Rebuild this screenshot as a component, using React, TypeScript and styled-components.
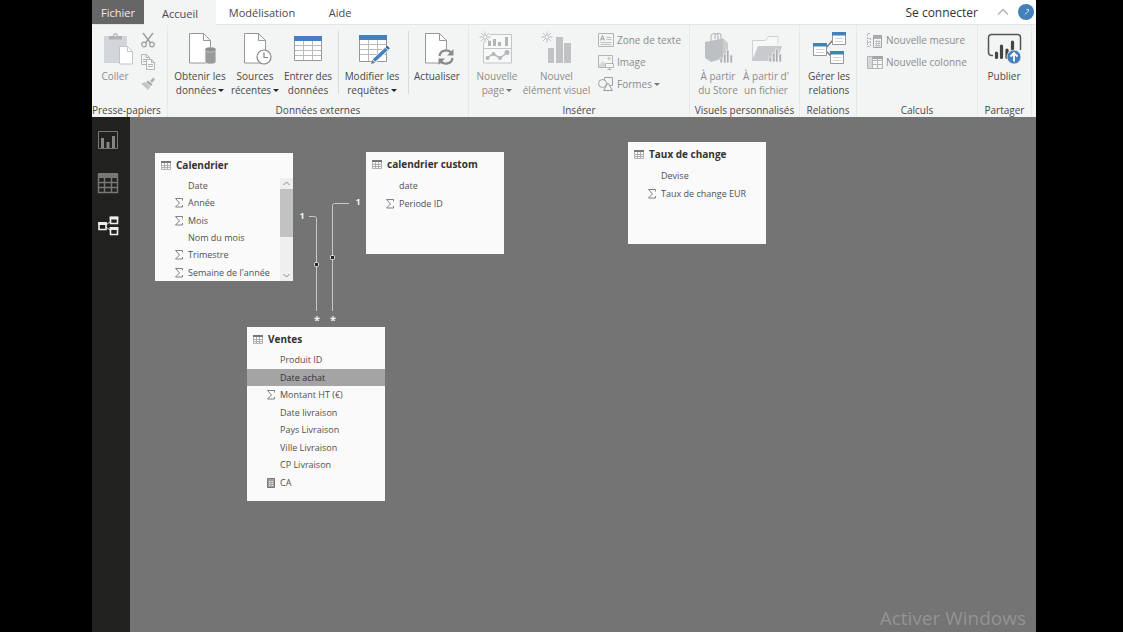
import React from "react";
import styled, { createGlobalStyle } from "styled-components";

const BLUE = "#4480bb";
const INK = "#4a4a4a";
const FAINT = "#b2b5b8";

const GlobalStyle = createGlobalStyle`
  * { box-sizing: border-box; }
  body {
    margin: 0;
    background: #000;
    font-family: "Open Sans", "Noto Sans", sans-serif;
    color: ${INK};
  }
  button { font-family: inherit; }
`;

const Screen = styled.div`
  min-height: 100vh;
  padding: 0 87px 0 92px;
  display: flex;
  flex-direction: column;
`;

/* ---------- tab strip ---------- */

const TabBar = styled.nav`
  display: flex;
  height: 25px;
  background: #fff;
  border-bottom: 1px solid #e4e5e7;
`;

const Tab = styled.button<{ $width: number; $kind?: "file" | "active" }>`
  width: ${(p) => p.$width}px;
  height: ${(p) => (p.$kind === "active" ? 25 : 24)}px;
  padding: 2px 0 0;
  border: 0;
  font-size: 11px;
  line-height: 22px;
  color: ${(p) => (p.$kind === "file" ? "#ececec" : INK)};
  background: ${(p) =>
    p.$kind === "file" ? "#666" : p.$kind === "active" ? "#f3f4f4" : "transparent"};
`;

const Account = styled.div`
  margin-left: auto;
  padding-right: 2px;
  display: flex;
  align-items: center;
`;

const SignIn = styled.button`
  padding: 2px 0 0;
  border: 0;
  background: none;
  color: #333;
  font-size: 12px;
  line-height: 22px;
  margin-right: 18px;
`;

const IconButton = styled.button`
  display: flex;
  align-items: center;
  justify-content: center;
  padding: 0;
  border: 0;
  background: none;
`;

const HelpButton = styled(IconButton)`
  margin-left: 8px;
`;

/* ---------- ribbon ---------- */

const Ribbon = styled.div`
  display: grid;
  grid-template-columns: 76fr 301fr 221fr 110fr 57fr 121fr 54fr;
  height: 92px;
  padding-right: 4px;
  background: #f3f4f4;
`;

const Group = styled.section`
  min-width: 0;
  display: flex;
  flex-direction: column;
  border-right: 1px solid #e6e8ea;
`;

const GroupBody = styled.div`
  flex: 1;
  display: flex;
  padding: 4px 0 0 4px;
`;

const GroupTitle = styled.div<{ $start?: boolean }>`
  font-size: 10px;
  line-height: 14px;
  text-align: ${(p) => (p.$start ? "left" : "center")};
  white-space: nowrap;
`;

const BigButton = styled.button<{ $width: number; $off?: boolean }>`
  flex: none;
  width: ${(p) => p.$width}px;
  padding: 2px 0 0;
  border: 0;
  background: none;
  display: flex;
  flex-direction: column;
  align-items: center;
  gap: 4px;
  font-size: 10px;
  line-height: 14px;
  white-space: nowrap;
  color: ${(p) => (p.$off ? "#8c8c8c" : INK)};
`;

const Line = styled.span`
  display: block;
`;

const SmallList = styled.div`
  display: flex;
  flex-direction: column;
  padding-left: 6px;
`;

const SmallButton = styled.button`
  display: flex;
  align-items: center;
  gap: 3px;
  height: 22px;
  padding: 0;
  border: 0;
  background: none;
  color: #8c8c8c;
  font-size: 10px;
  line-height: 14px;
  white-space: nowrap;
`;

const Divider = styled.span`
  flex: none;
  width: 1px;
  height: 63px;
  margin: 2px 1px 0 4px;
  background: #d6dade;
`;

const CaretMark = styled.span<{ $off?: boolean }>`
  display: inline-block;
  margin-left: 2px;
  vertical-align: 2px;
  border: 3px solid transparent;
  border-top: 3px solid ${(p) => (p.$off ? "#777" : "#222")};
  border-bottom: 0;
`;

/* ---------- work area ---------- */

const Work = styled.div`
  flex: 1;
  display: flex;
`;

const ViewNav = styled.nav`
  flex: none;
  width: 38px;
  padding: 12px 0 0 5px;
  background: #21211f;
  display: flex;
  flex-direction: column;
  gap: 21px;
`;

const ViewButton = styled(IconButton)`
  width: 22px;
  height: 22px;
`;

const Canvas = styled.main`
  position: relative;
  flex: 1;
  background: #747474;
  overflow: hidden;
`;

const Links = styled.svg`
  position: absolute;
  left: 0;
  top: 0;
`;

const Card = styled.article<{ $x: number; $y: number; $h: number; $rest: number }>`
  position: absolute;
  left: ${(p) => p.$x}px;
  top: ${(p) => p.$y}px;
  width: 138px;
  height: ${(p) => p.$h}px;
  padding-bottom: ${(p) => p.$rest}px;
  background: #fafafa;
  display: flex;
  flex-direction: column;
`;

const CardTitle = styled.h2`
  margin: 0;
  padding-left: 6px;
  display: flex;
  align-items: center;
  gap: 5px;
  height: 24px;
  font-size: 10px;
  font-weight: 700;
  color: #333;
`;

const CardBody = styled.div`
  flex: 1;
  min-height: 0;
  display: flex;
`;

const Fields = styled.ul`
  flex: 1;
  margin: 0;
  padding: 0;
  list-style: none;
  display: grid;
  grid-auto-rows: 1fr;
`;

const Field = styled.li<{ $selected?: boolean }>`
  display: grid;
  grid-template-columns: 10px 1fr;
  column-gap: 4px;
  align-items: center;
  min-height: 0;
  padding: 1px 0 0 19px;
  font-size: 9px;
  line-height: 16px;
  white-space: nowrap;
  color: ${(p) => (p.$selected ? "#333" : "#505050")};
  background: ${(p) => (p.$selected ? "#a3a4a3" : "transparent")};
`;

const ScrollTrack = styled.div`
  flex: none;
  width: 13px;
  margin-top: 1px;
  background: #efefef;
  display: flex;
  flex-direction: column;
  align-items: center;
  justify-content: space-between;
`;

const ScrollThumb = styled.div`
  width: 13px;
  height: 48px;
  margin-bottom: auto;
  background: #c2c2c2;
`;

const Watermark = styled.div`
  position: absolute;
  right: 10px;
  bottom: 0;
  font-size: 19px;
  line-height: 28px;
  color: #939393;
`;

/* ---------- large icons ---------- */

const Big = ({ children }: { children: React.ReactNode }) => (
  <svg width="40" height="34" viewBox="0 0 40 34" fill="none" aria-hidden="true">
    {children}
  </svg>
);

const Sheet = ({ x }: { x: number }) => (
  <g transform={`translate(${x} 0)`} stroke="#979797">
    <path d="M.5 2.500h14l7 7v22.500h-21z" fill="#fff" />
    <path d="M14.500 2.500v7h7" />
  </g>
);

const Spark = ({ x, y }: { x: number; y: number }) => (
  <g transform={`translate(${x} ${y})`}>
    <circle r="5.500" fill="#f3f4f4" />
    <path d="M0-5.500v11M-5.500 0h11M-4-4l8 8M4-4l-8 8" stroke="#bcbfc1" />
    <circle r="2" fill="#f3f4f4" stroke="#bcbfc1" strokeWidth=".8" />
  </g>
);

const PasteIcon = () => (
  <Big>
    <path d="M9 5h23v27H9z" fill="#d2d5d9" />
    <path d="M14 8.500V5h4c0-4 5-4 5 0h4v3.500z" fill="#b0b3b6" />
    <path d="M19.500 3.500h2v2h-2z" fill="#f3f4f4" />
    <path d="M24.500 15.500h8l5 5v12.500h-13z" fill="#fff" stroke="#c2c6c9" />
    <path d="M32.500 15.500v5h5" stroke="#c2c6c9" />
  </Big>
);

const GetDataIcon = () => (
  <Big>
    <Sheet x={9} />
    <path d="M25 19v11.500c0 3.500 11 3.500 11 0V19z" fill="#9a9a9a" stroke="#f3f4f4" strokeWidth=".8" />
    <ellipse cx="30.500" cy="18.500" rx="5.500" ry="2.500" fill="#8d8d8d" stroke="#ddd" strokeWidth=".6" />
  </Big>
);

const RecentIcon = () => (
  <Big>
    <Sheet x={9} />
    <circle cx="29" cy="26" r="7" fill="#fff" stroke="#858585" strokeWidth="1.200" />
    <path d="M29 21.500V26.500h4" stroke="#858585" strokeWidth="1.200" />
  </Big>
);

const Sheetgrid = ({ x, y, h }: { x: number; y: number; h: number }) => (
  <g transform={`translate(${x} ${y})`}>
    <path d={`M.5.500h27v${h}h-27z`} fill="#fff" stroke="#979797" />
    <path
      d={`M9.500 5v${h - 5}M18.500 5v${h - 5}M1 9.500h26M1 14.500h26M1 19.500h26`}
      stroke="#bbb"
    />
    <path d="M0 0h28v5H0z" fill={BLUE} />
  </g>
);

const EnterIcon = () => (
  <Big>
    <Sheetgrid x={6} y={5} h={24} />
  </Big>
);

const EditIcon = () => (
  <Big>
    <Sheetgrid x={7} y={4} h={26} />
    <path d="M19 33l1.500-5L33 15.500l4 3.500L24 31.500z" fill="#f8f8f8" />
    <path d="M22 29.500L34.500 18" stroke={BLUE} strokeWidth="3.500" />
    <path d="M35 17.500l1.500-1.500" stroke="#2f6396" strokeWidth="3.500" />
    <path d="M19 33l1.200-4 3 2.800z" fill="#777" />
  </Big>
);

const RefreshIcon = () => (
  <Big>
    <Sheet x={8} />
    <circle cx="29" cy="26" r="8" fill="#f3f4f4" />
    <path d="M22.500 25c.8-6 8.500-7.500 12-3M35.500 27c-.8 6-8.500 7.500-12 3" stroke="#8a8a8a" strokeWidth="2.200" />
    <path d="M36.500 18v6.500H30zM21.500 34v-6.500H28z" fill="#8a8a8a" />
  </Big>
);

const NewPageIcon = () => (
  <Big>
    <path d="M6.500 3.500h28v28.500h-28zM7 17.500h27" fill="#f8f8f8" stroke="#c3c6c8" />
    <path d="M11 10h3v5h-3zM16 8h3v7h-3zM21 11h3v4h-3zM28 6h3v9h-3z" fill="#b3b6b9" />
    <path d="M10 27l6-4 7 4 8-6" stroke="#b6b9bb" strokeWidth="1.500" />
    <g fill="#b3b6b9">
      <circle cx="10.500" cy="27" r="2" />
      <circle cx="16.500" cy="23" r="2" />
      <circle cx="23" cy="27" r="2" />
      <circle cx="30" cy="21.500" r="2.500" />
    </g>
    <Spark x={8} y={6} />
  </Big>
);

const NewVisualIcon = () => (
  <Big>
    <path d="M11 17h6v15h-6zM19 6h7v26h-7zM27 12h7v20h-7z" fill="#c0c3c5" />
    <Spark x={10} y={6} />
  </Big>
);

const MiniBars = ({ x, y }: { x: number; y: number }) => (
  <path
    transform={`translate(${x} ${y})`}
    d="M0 8h2.500v5H0zM3.500 4H6v9H3.500zM6.500 0H9v13H6.500zM10 5h2.500v8H10z"
    fill="#a9adb0"
    stroke="#f3f4f4"
    strokeWidth=".7"
  />
);

const StoreIcon = () => (
  <Big>
    <path d="M13 10V5.500c0-4 7-4 7 0V10M17 8V4.500c0-3 6-3 6 0V8" stroke="#b8bbbe" strokeWidth="1.200" />
    <path d="M7 11l18-3.500L30 12v14l-17 5-6-4z" fill="#bdc0c3" />
    <path d="M25 7.500L30 12v14l-5-2z" fill="#cbced0" />
    <MiniBars x={22} y={19} />
  </Big>
);

const FolderIcon = () => (
  <Big>
    <path d="M6.500 29V9.500h13l3-4h9.500v7" fill="#f7f7f7" stroke="#cdd0d2" />
    <path d="M6 30l6-15h24l-5 15z" fill="#c8cbcd" />
    <MiniBars x={23} y={18} />
  </Big>
);

const MiniTable = ({ x, y }: { x: number; y: number }) => (
  <g transform={`translate(${x} ${y})`}>
    <path d="M.5.500h13v12H.500z" fill="#fff" stroke="#979797" />
    <path d="M0 0h14v3.500H0z" fill={BLUE} />
    <path d="M3 6.500h8M3 9.500h8" stroke="#d2d2d2" />
  </g>
);

const RelationsIcon = () => (
  <Big>
    <path d="M16 18l8-9M16 19l6 6" stroke="#808080" strokeWidth="1.500" />
    <MiniTable x={23} y={1} />
    <MiniTable x={4} y={12} />
    <MiniTable x={21} y={20} />
  </Big>
);

const PublishIcon = () => (
  <Big>
    <path d="M9 24.500H7.500a3 3 0 0 1-3-3V6.500a3 3 0 0 1 3-3h26a3 3 0 0 1 3 3V19" stroke="#555" strokeWidth="1.500" />
    <path d="M12.500 22v4.500M17.500 15v11.500M23 19v7.500M28.500 11v12" stroke="#444" strokeWidth="3.200" strokeLinecap="round" />
    <circle cx="30" cy="26" r="7" fill={BLUE} stroke="#f3f4f4" strokeWidth=".8" />
    <path d="M30 30.500v-8M26.500 25.500l3.500-3.500 3.500 3.500" stroke="#fff" strokeWidth="1.800" />
  </Big>
);

/* ---------- small icons ---------- */

const Small = ({ children }: { children: React.ReactNode }) => (
  <svg width="16" height="16" viewBox="0 0 16 16" fill="none" stroke={FAINT} aria-hidden="true">
    {children}
  </svg>
);

const CutIcon = () => (
  <Small>
    <path d="M3 1l7.500 10M13 1L5.500 11" stroke="#9da0a3" strokeWidth="1.500" />
    <circle cx="4" cy="12.500" r="2.300" stroke="#9da0a3" strokeWidth="1.200" />
    <circle cx="12" cy="12.500" r="2.300" stroke="#9da0a3" strokeWidth="1.200" />
  </Small>
);

const CopyIcon = () => (
  <Small>
    <path d="M1.500.500h5l3 3v7h-8zM6 .5v3h3.500M3 5.500h4M3 7.500h4" />
    <path d="M6.500 5.500h5l3 3v7h-8z" fill="#f7f7f7" />
    <path d="M11.500 5.500v3h3M8 10.500h5M8 12.500h5" />
  </Small>
);

const BrushIcon = () => (
  <Small>
    <path d="M10 5l3-3.500 2 2L12 7z" fill="#b0b3b5" stroke="none" />
    <path d="M8 4.500l4.500 4-1.500 1.500L6.500 6z" fill="#a2a5a7" stroke="none" />
    <path d="M1 7.500l5-1.500 4.500 4.500L8 14z" fill="#c3c6c8" stroke="none" />
  </Small>
);

const TextBoxIcon = () => (
  <Small>
    <path d="M.5 1.500h15v13H.500z" />
    <path d="M2.500 8.500l2-5 2 5M3 7h3" stroke="#9da0a3" />
    <path d="M8.500 5.500h5M8.500 7.500h5M2.500 10.500h11M2.500 12.500h11" strokeWidth=".8" />
  </Small>
);

const ImageIcon = () => (
  <Small>
    <path d="M7 13.500H.500v-12h14V9" />
    <path d="M1 11l4-4 4 4v2H1z" fill="#d5d7d9" stroke="none" />
    <circle cx="11" cy="4.500" r="1" />
    <path d="M7.500 9.500h8v4h-8zM9.500 15.500h4M11.500 13.500v2" fill="#f7f7f7" />
  </Small>
);

const ShapesIcon = () => (
  <Small>
    <path d="M6.500 1.500h8v8h-8z" stroke="#9da0a3" />
    <circle cx="4.500" cy="7.500" r="4" fill="#f3f4f4" stroke="#9da0a3" />
    <path d="M10 7l4.500 7.500h-9z" fill="#f3f4f4" stroke="#9da0a3" />
  </Small>
);

const MeasureIcon = () => (
  <Small>
    <path d="M.5 2v13M3.500 6v9M1 1.500h3M.500 6.500h3M.500 10.500h3M.500 14.500h3" strokeDasharray="2 1" />
    <path d="M6.500 3.500h8v12h-8z" fill="#f7f7f7" stroke="#a2a5a8" />
    <path d="M7 4h7v3H7z" fill="#adb0b3" stroke="none" />
    <path d="M8 9.500h5.500M8 11.500h5.500M8 13.500h5.500M9.500 8v7M12 8v7" strokeWidth=".8" />
  </Small>
);

const ColumnIcon = () => (
  <Small>
    <path d="M.5 2.500h15v12H.500zM1 6.500h14M1 10.500h14M5.500 3v11M10.500 3v11" />
    <path d="M6 2h10v3H6z" fill="#a2a5a8" stroke="none" />
    <path d="M1 3h4v11H1z" fill="#d6d8da" stroke="none" />
  </Small>
);

const GridGlyph = () => (
  <svg width="10" height="10" viewBox="0 0 10 10" fill="none" aria-hidden="true">
    <path d="M.5 1.500h9v8h-9zM1 5.500h8M1 7.500h8M3.500 3v6M6.500 3v6" stroke="#a0a0a0" strokeWidth=".8" />
    <path d="M0 1h10v2H0z" fill="#777" />
  </svg>
);

const SumGlyph = () => (
  <svg width="10" height="10" viewBox="0 0 10 10" fill="none" aria-hidden="true">
    <path d="M8.500 2.500v-2h-7l4 4.500-4 4h7v-2" stroke="#808080" />
  </svg>
);

const CalcGlyph = () => (
  <svg width="10" height="10" viewBox="0 0 10 10" fill="none" aria-hidden="true">
    <path d="M1.500.500h7v9h-7z" fill="#a0a0a0" stroke="#777" />
    <path d="M3 3.500h4M3 5.500h4M3 7.500h4" stroke="#e6e6e6" strokeDasharray="1 .5" />
  </svg>
);

/* ---------- data ---------- */

type FieldData = { name: string; mark?: "sum" | "calc"; selected?: boolean };
type TableData = {
  title: string;
  x: number;
  y: number;
  h: number;
  rest: number;
  scroll?: boolean;
  fields: FieldData[];
};

const tables: TableData[] = [
  {
    title: "Calendrier", x: 25, y: 36, h: 128, rest: 0, scroll: true,
    fields: [
      { name: "Date" },
      { name: "Année", mark: "sum" },
      { name: "Mois", mark: "sum" },
      { name: "Nom du mois" },
      { name: "Trimestre", mark: "sum" },
      { name: "Semaine de l'année", mark: "sum" },
    ],
  },
  {
    title: "calendrier custom", x: 236, y: 35, h: 102, rest: 42,
    fields: [{ name: "date" }, { name: "Periode ID", mark: "sum" }],
  },
  {
    title: "Taux de change", x: 498, y: 25, h: 102, rest: 42,
    fields: [{ name: "Devise" }, { name: "Taux de change EUR", mark: "sum" }],
  },
  {
    title: "Ventes", x: 117, y: 210, h: 174, rest: 10,
    fields: [
      { name: "Produit ID" },
      { name: "Date achat", selected: true },
      { name: "Montant HT (€)", mark: "sum" },
      { name: "Date livraison" },
      { name: "Pays Livraison" },
      { name: "Ville Livraison" },
      { name: "CP Livraison" },
      { name: "CA", mark: "calc" },
    ],
  },
];

/* ---------- composed parts ---------- */

type BigProps = {
  icon: React.ReactNode;
  width: number;
  lines: string[];
  menu?: boolean;
  off?: boolean;
};

const Command = ({ icon, width, lines, menu, off }: BigProps) => (
  <BigButton $width={width} $off={off}>
    {icon}
    <span>
      {lines.map((text, i) => (
        <Line key={text}>
          {text}
          {menu && i === lines.length - 1 && <CaretMark $off={off} />}
        </Line>
      ))}
    </span>
  </BigButton>
);

const Arrow = ({ down }: { down?: boolean }) => (
  <svg width="9" height="11" viewBox="0 0 9 11" fill="none" aria-hidden="true">
    <path d={down ? "M1.500 4l3 3 3-3" : "M1.500 7l3-3 3 3"} stroke="#8a8a8a" />
  </svg>
);

const TableCard = ({ table }: { table: TableData }) => (
  <Card $x={table.x} $y={table.y} $h={table.h} $rest={table.rest}>
    <CardTitle>
      <GridGlyph />
      {table.title}
    </CardTitle>
    <CardBody>
      <Fields>
        {table.fields.map((f) => (
          <Field key={f.name} $selected={f.selected}>
            {f.mark === "sum" ? <SumGlyph /> : f.mark === "calc" ? <CalcGlyph /> : <span />}
            <span>{f.name}</span>
          </Field>
        ))}
      </Fields>
      {table.scroll && (
        <ScrollTrack>
          <Arrow />
          <ScrollThumb />
          <Arrow down />
        </ScrollTrack>
      )}
    </CardBody>
  </Card>
);

const Relationships = () => (
  <Links width="400" height="220" viewBox="0 0 400 220" fill="none" aria-hidden="true">
    <path d="M179 99.500h5.500q2 0 2 2V194M219 86.500h-14.500q-2 0-2 2V194" stroke="#c8c8c8" />
    <g fill="#222" stroke="#e8e8e8">
      <rect x="184.500" y="145.500" width="4" height="4" rx="1" />
      <rect x="200.500" y="138.500" width="4" height="4" rx="1" />
    </g>
    <g fill="#f2f2f2" fontSize="9" fontWeight="700" textAnchor="middle">
      <text x="172" y="102">1</text>
      <text x="228" y="88">1</text>
    </g>
    <g fill="#f2f2f2" fontSize="11" fontWeight="700" textAnchor="middle">
      <text x="187" y="207">*</text>
      <text x="203" y="207">*</text>
    </g>
  </Links>
);

export default function App() {
  return (
    <Screen>
      <GlobalStyle />
      <TabBar>
        <Tab $width={52} $kind="file">Fichier</Tab>
        <Tab $width={72} $kind="active">Accueil</Tab>
        <Tab $width={92}>Modélisation</Tab>
        <Tab $width={64}>Aide</Tab>
        <Account>
          <SignIn>Se connecter</SignIn>
          <IconButton aria-label="Réduire le ruban">
            <svg width="14" height="10" viewBox="0 0 14 10" fill="none">
              <path d="M2 7.500l5-5 5 5" stroke="#b5b5b5" strokeWidth="1.500" />
            </svg>
          </IconButton>
          <HelpButton aria-label="Aide en ligne">
            <svg width="16" height="16" viewBox="0 0 16 16" fill="none">
              <circle cx="8" cy="8" r="8" fill={BLUE} />
              <path d="M8.500 5.500h2V7L7 10.500" stroke="#dce8f4" />
            </svg>
          </HelpButton>
        </Account>
      </TabBar>

      <Ribbon>
        <Group>
          <GroupBody>
            <Command icon={<PasteIcon />} width={38} lines={["Coller"]} off />
            <SmallList>
              <SmallButton aria-label="Couper"><CutIcon /></SmallButton>
              <SmallButton aria-label="Copier"><CopyIcon /></SmallButton>
              <SmallButton aria-label="Reproduire la mise en forme"><BrushIcon /></SmallButton>
            </SmallList>
          </GroupBody>
          <GroupTitle $start>Presse-papiers</GroupTitle>
        </Group>

        <Group>
          <GroupBody>
            <Command icon={<GetDataIcon />} width={56} lines={["Obtenir les", "données"]} menu />
            <Command icon={<RecentIcon />} width={54} lines={["Sources", "récentes"]} menu />
            <Command icon={<EnterIcon />} width={52} lines={["Entrer des", "données"]} />
            <Divider />
            <Command icon={<EditIcon />} width={64} lines={["Modifier les", "requêtes"]} menu />
            <Divider />
            <Command icon={<RefreshIcon />} width={54} lines={["Actualiser"]} />
          </GroupBody>
          <GroupTitle>Données externes</GroupTitle>
        </Group>

        <Group>
          <GroupBody>
            <Command icon={<NewPageIcon />} width={48} lines={["Nouvelle", "page"]} menu off />
            <Command icon={<NewVisualIcon />} width={71} lines={["Nouvel", "élément visuel"]} off />
            <SmallList>
              <SmallButton><TextBoxIcon />Zone de texte</SmallButton>
              <SmallButton><ImageIcon />Image</SmallButton>
              <SmallButton><ShapesIcon /><span>Formes<CaretMark $off /></span></SmallButton>
            </SmallList>
          </GroupBody>
          <GroupTitle>Insérer</GroupTitle>
        </Group>

        <Group>
          <GroupBody>
            <Command icon={<StoreIcon />} width={48} lines={["À partir", "du Store"]} off />
            <Command icon={<FolderIcon />} width={48} lines={["À partir d'", "un fichier"]} off />
          </GroupBody>
          <GroupTitle>Visuels personnalisés</GroupTitle>
        </Group>

        <Group>
          <GroupBody>
            <Command icon={<RelationsIcon />} width={50} lines={["Gérer les", "relations"]} />
          </GroupBody>
          <GroupTitle>Relations</GroupTitle>
        </Group>

        <Group>
          <GroupBody>
            <SmallList>
              <SmallButton><MeasureIcon />Nouvelle mesure</SmallButton>
              <SmallButton><ColumnIcon />Nouvelle colonne</SmallButton>
            </SmallList>
          </GroupBody>
          <GroupTitle>Calculs</GroupTitle>
        </Group>

        <Group>
          <GroupBody>
            <Command icon={<PublishIcon />} width={44} lines={["Publier"]} />
          </GroupBody>
          <GroupTitle>Partager</GroupTitle>
        </Group>
      </Ribbon>

      <Work>
        <ViewNav>
          <ViewButton aria-label="Rapport">
            <svg width="22" height="22" viewBox="0 0 22 22" fill="none">
              <path d="M1.500 2.500h19v17h-19z" stroke="#777" />
              <path d="M4 9h3v10H4zM9.500 13h3v6h-3zM15 7h3v12h-3z" fill="#858585" />
            </svg>
          </ViewButton>
          <ViewButton aria-label="Données">
            <svg width="22" height="22" viewBox="0 0 22 22" fill="none">
              <path d="M1 1h20v5H1z" fill="#777" />
              <path d="M1.500 2.500h19v18h-19zM1 10.500h20M1 15.500h20M7.500 6v14M14.500 6v14" stroke="#777" strokeWidth="1.500" />
            </svg>
          </ViewButton>
          <ViewButton aria-label="Relations">
            <svg width="22" height="22" viewBox="0 0 22 22" fill="none">
              <path d="M9 10l5-4M9 12l5 4" stroke="#e0e0e0" />
              <path d="M2 8h7v6.500H2zM13.500 2.500h7v6h-7zM13.500 13h7v6.500h-7z" stroke="#eee" strokeWidth="1.600" />
              <path d="M1.200 7h8.600v3H1.200zM12.700 1.500h8.600v3h-8.600zM12.700 12h8.600v3h-8.600z" fill="#eee" />
            </svg>
          </ViewButton>
        </ViewNav>
        <Canvas>
          <Relationships />
          {tables.map((t) => (
            <TableCard key={t.title} table={t} />
          ))}
          <Watermark>Activer Windows</Watermark>
        </Canvas>
      </Work>
    </Screen>
  );
}
